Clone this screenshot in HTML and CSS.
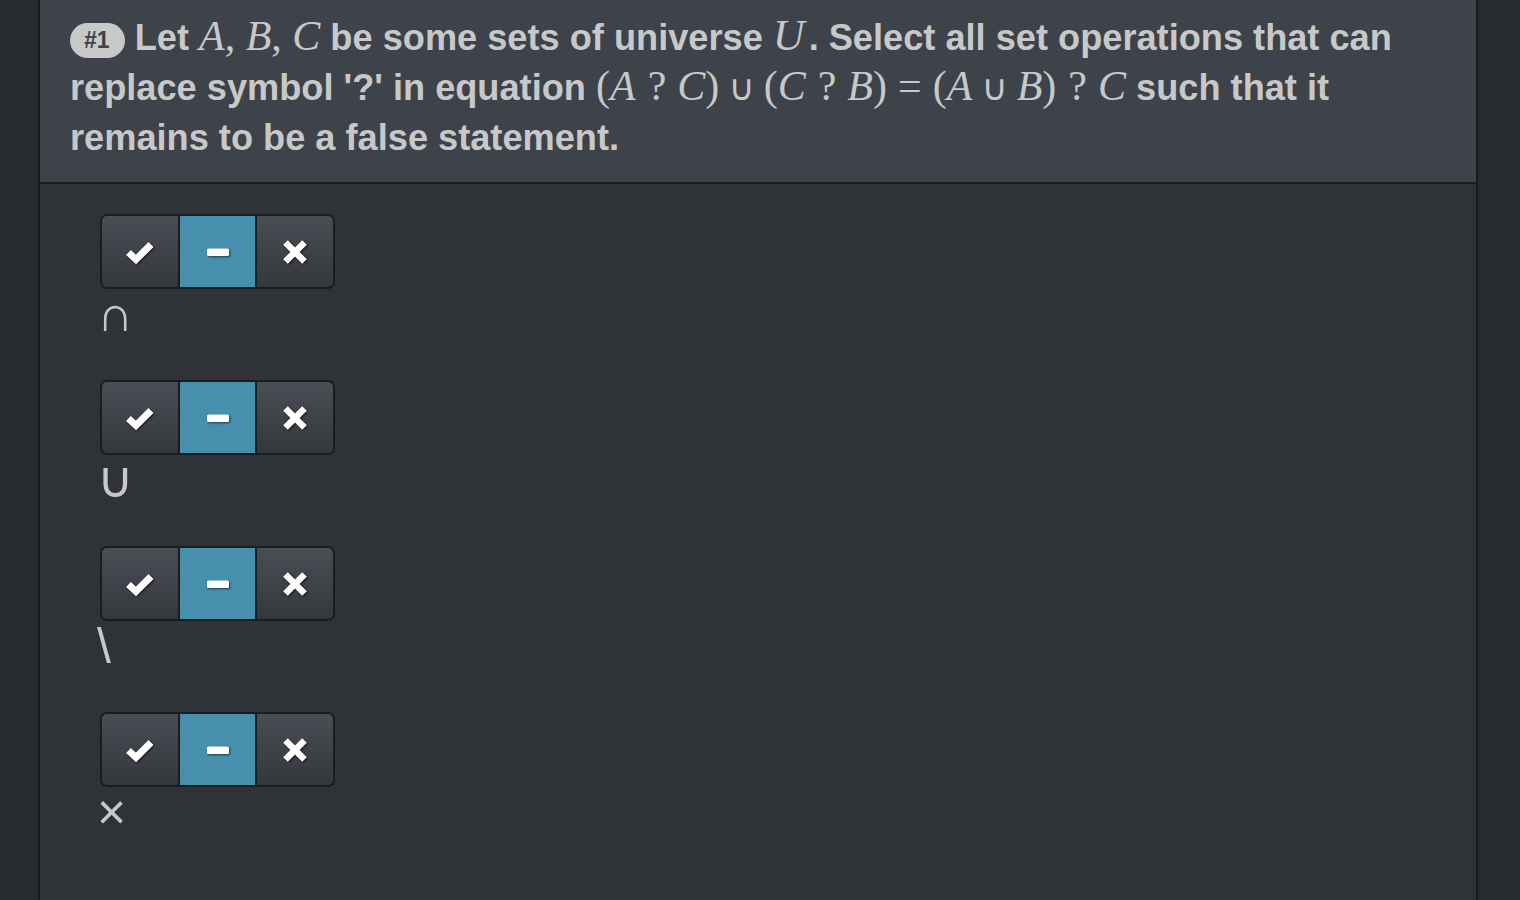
FILE: index.html
```html
<!DOCTYPE html>
<html lang="en">
<head>
<meta charset="utf-8">
<title>Question #1</title>
<link rel="stylesheet" href="styles.css">
</head>
<body>
<div class="page">
  <div class="panel">
    <div class="question">
      <span class="badge">#1</span> Let <span class="math"><i>A</i>, <i>B</i>, <i>C</i></span> be some sets of universe <span class="math"><i class="script">U</i></span>. Select all set operations that can<br>
      replace symbol '?' in equation <span class="math">(<i>A</i><span class="op">?</span><i>C</i>)<span class="cup">∪</span>(<i>C</i><span class="op">?</span><i>B</i>)<span class="rel">=</span>(<i>A</i><span class="cup">∪</span><i>B</i>)<span class="op">?</span><i>C</i></span> such that it<br>
      remains to be a false statement.
    </div>
    <div class="answers">
      <div class="item">
        <div class="toggle">
          <div class="seg"><svg class="ico" viewBox="0 0 30 26"><path class="chk" d="M3.5 13.5 L11 20.5 L26 5.5"/></svg></div>
          <div class="seg on"><svg class="ico" viewBox="0 0 30 26"><rect x="4" y="9.5" width="22" height="7.5" rx="1.5"/></svg></div>
          <div class="seg"><svg class="ico" viewBox="0 0 30 26"><path class="xx" d="M5.5 3.5 L24.5 22.5 M24.5 3.5 L5.5 22.5"/></svg></div>
        </div>
        <div class="label">∩</div>
      </div>
      <div class="item">
        <div class="toggle">
          <div class="seg"><svg class="ico" viewBox="0 0 30 26"><path class="chk" d="M3.5 13.5 L11 20.5 L26 5.5"/></svg></div>
          <div class="seg on"><svg class="ico" viewBox="0 0 30 26"><rect x="4" y="9.5" width="22" height="7.5" rx="1.5"/></svg></div>
          <div class="seg"><svg class="ico" viewBox="0 0 30 26"><path class="xx" d="M5.5 3.5 L24.5 22.5 M24.5 3.5 L5.5 22.5"/></svg></div>
        </div>
        <div class="label">∪</div>
      </div>
      <div class="item">
        <div class="toggle">
          <div class="seg"><svg class="ico" viewBox="0 0 30 26"><path class="chk" d="M3.5 13.5 L11 20.5 L26 5.5"/></svg></div>
          <div class="seg on"><svg class="ico" viewBox="0 0 30 26"><rect x="4" y="9.5" width="22" height="7.5" rx="1.5"/></svg></div>
          <div class="seg"><svg class="ico" viewBox="0 0 30 26"><path class="xx" d="M5.5 3.5 L24.5 22.5 M24.5 3.5 L5.5 22.5"/></svg></div>
        </div>
        <div class="label">\</div>
      </div>
      <div class="item">
        <div class="toggle">
          <div class="seg"><svg class="ico" viewBox="0 0 30 26"><path class="chk" d="M3.5 13.5 L11 20.5 L26 5.5"/></svg></div>
          <div class="seg on"><svg class="ico" viewBox="0 0 30 26"><rect x="4" y="9.5" width="22" height="7.5" rx="1.5"/></svg></div>
          <div class="seg"><svg class="ico" viewBox="0 0 30 26"><path class="xx" d="M5.5 3.5 L24.5 22.5 M24.5 3.5 L5.5 22.5"/></svg></div>
        </div>
        <div class="label">×</div>
      </div>
    </div>
  </div>
</div>
</body>
</html>
```

FILE: styles.css
```css
html, body {
  margin: 0;
  padding: 0;
  height: 100%;
  background: #272a2f;
  overflow: hidden;
}
.page {
  height: 100%;
  padding: 0 42px 0 38px;
  box-sizing: border-box;
}
.panel {
  height: 100%;
  background: #2f3237;
  border-left: 2px solid #17191c;
  border-right: 2px solid #17191c;
}
.question {
  height: 184px;
  box-sizing: border-box;
  background: #3e424a;
  border-bottom: 2px solid #1a1c1f;
  padding: 13px 30px 0 30px;
  font-family: "Liberation Sans", Arial, sans-serif;
  font-weight: bold;
  font-size: 36.2px;
  line-height: 50px;
  color: #c8c8c8;
  white-space: nowrap;
}
.badge {
  display: inline-block;
  background: #c8c8c8;
  color: #3e424a;
  font-size: 23px;
  line-height: 35px;
  height: 35px;
  padding: 0 15px 0 14px;
  border-radius: 18px;
  vertical-align: 2px;
}
.math {
  font-family: "Liberation Serif", "Times New Roman", serif;
  font-weight: normal;
  font-size: 42px;
  line-height: 1;
}
.math i {
  font-style: italic;
}
.math .op {
  margin: 0 11px 0 12px;
}
.math .cup {
  font-family: "DejaVu Sans", sans-serif;
  font-size: 36px;
  margin: 0 9px;
}
.math .rel {
  margin: 0 11px;
}
.math .script {
  font-size: 44px;
  margin-right: 4px;
}
.answers {
  padding: 30px 60px;
}
.item {
  height: 166px;
}
.toggle {
  display: flex;
  width: 235px;
  height: 75px;
  box-sizing: border-box;
  border: 2px solid #1a1c1f;
  border-radius: 7px;
  overflow: hidden;
  background: #1a1c1f;
  gap: 2px;
}
.seg {
  flex: 1;
  display: flex;
  align-items: center;
  justify-content: center;
  background: linear-gradient(#4a4d54, #34373c);
}
.seg.on {
  background: #4690ae;
}
.ico {
  width: 30px;
  height: 26px;
  overflow: visible;
  filter: drop-shadow(1px 1.5px 1px rgba(0,0,0,0.6));
}
.ico path {
  fill: none;
  stroke: #ffffff;
  stroke-width: 6.5;
  stroke-linecap: butt;
  stroke-linejoin: miter;
}
.ico .chk {
  stroke-width: 7;
}
.ico rect {
  fill: #ffffff;
}
.label {
  margin-left: -3px;
  font-family: "Liberation Sans", Arial, sans-serif;
  font-size: 50px;
  line-height: 50px;
  color: #c8c8c8;
}
```
